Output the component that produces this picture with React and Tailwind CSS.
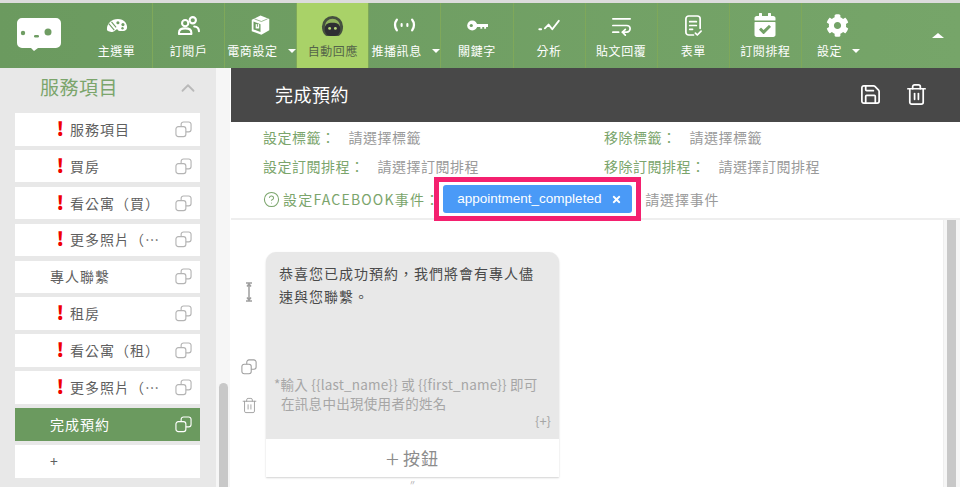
import { ChevronUp, CircleHelp, Save, Trash2, WrapText } from 'lucide-react';
import { FaCalendarCheck, FaCog, FaTimes } from 'react-icons/fa';

const font = { fontFamily: '"Noto Sans CJK TC", "Liberation Sans", sans-serif' };

function CopyIcon({ className }) {
  return (
    <svg viewBox="0 0 18 18" fill="none" stroke="currentColor" strokeWidth="1.2" className={className}>
      <rect x="1" y="6" width="10.5" height="10.5" rx="2.5" />
      <path d="M6.5 6V3.5A2.5 2.5 0 0 1 9 1h5.5A2.5 2.5 0 0 1 17 3.5V9a2.5 2.5 0 0 1-2.5 2.5h-3" />
    </svg>
  );
}

function Palette() {
  return (
    <svg viewBox="0 0 24 16" className="h-[15px] w-[22px]">
      <path d="M1 12C1 6 6 1 13 1s10 5 10 9c0 3-2 4-4 4h-4c-2 0-2-2-3-2s-2 2-5 3c-3 0-6-1-6-3z" fill="white" />
      <circle cx="13" cy="5" r="1.700" fill="#6f9d63" />
      <circle cx="18.500" cy="7" r="1.700" fill="#6f9d63" />
      <circle cx="18" cy="11" r="1.300" fill="#6f9d63" />
      <path d="M3 6l6 7M6 4l5 6" stroke="#6f9d63" strokeWidth="1.200" />
    </svg>
  );
}

function Users() {
  return (
    <svg viewBox="0 0 24 20" fill="none" stroke="white" strokeWidth="2.200" strokeLinejoin="round" className="h-[19px] w-[23px]">
      <circle cx="8.500" cy="7.500" r="3.300" />
      <path d="M2 19v-1.500C2 14.500 4.500 13 8.500 13s6.500 1.500 6.500 4.500V19z" />
      <circle cx="16.500" cy="4.500" r="3.300" />
      <path d="M18 11c3 .3 5 2 5 5" strokeLinecap="round" />
    </svg>
  );
}

function BoxIcon() {
  return (
    <svg viewBox="0 0 24 24" className="h-[22px] w-[21px]">
      <path d="M12 1l10 4v13l-9 5-11-4V6z" fill="white" />
      <path d="M4 8l8 3v9l-8-3z" fill="#6f9d63" />
      <path d="M6.500 11h4v5h-4z" fill="white" />
      <path d="M8.500 11v3" stroke="#6f9d63" strokeWidth="1" />
      <path d="M5 5l8 3 7-3" stroke="#6f9d63" strokeWidth="0.800" fill="none" />
    </svg>
  );
}

function Robot() {
  return (
    <svg viewBox="0 0 24 24" className="h-[23px] w-[23px]">
      <path d="M1 13a11 11 0 0 1 22 0c0 6-3 10-6 10H7c-3 0-6-4-6-10z" fill="#45503f" />
      <path d="M4 13a8 8 0 0 1 16 0z" fill="#8fb25c" />
      <rect x="4" y="9" width="16" height="14" rx="6" fill="#2e2e33" />
      <circle cx="9" cy="15" r="1.500" fill="#b7d877" />
      <circle cx="15" cy="15" r="1.500" fill="#b7d877" />
    </svg>
  );
}

function Broadcast() {
  return (
    <svg viewBox="0 0 24 14" fill="none" stroke="white" strokeWidth="2.400" strokeLinecap="round" className="h-[14px] w-[23px]">
      <path d="M4 1.500c-2.500 3-2.500 8 0 11M20 1.500c2.500 3 2.500 8 0 11" />
      <path d="M9 6v2M15 6v2" strokeWidth="2.200" />
    </svg>
  );
}

function Key() {
  return (
    <svg viewBox="0 0 22 11" className="h-[11px] w-[21px]">
      <circle cx="5.500" cy="5.500" r="5.300" fill="white" />
      <circle cx="4.500" cy="5.500" r="1.700" fill="#6f9d63" />
      <path d="M9 4h13v3h-2v2h-2V7h-2v2h-2V7H9z" fill="white" />
    </svg>
  );
}

function ChartLine() {
  return (
    <svg viewBox="0 0 24 14" fill="none" stroke="white" strokeWidth="2" strokeLinecap="round" strokeLinejoin="round" className="h-[13px] w-[23px]">
      <path d="M1 11h2M7 10l4-4 4 5 7-9" />
    </svg>
  );
}

function FormIcon() {
  return (
    <svg viewBox="0 0 20 24" fill="none" stroke="white" strokeWidth="1.800" strokeLinecap="round" strokeLinejoin="round" className="h-[23px] w-[19px]">
      <path d="M10 22H5a3 3 0 0 1-3-3V5a3 3 0 0 1 3-3h9a3 3 0 0 1 3 3v10" />
      <path d="M6 8h7M6 12h7M6 16h3M12 20l2 2 4-4" />
    </svg>
  );
}

const navItems = [
  { label: '主選單', icon: <Palette /> },
  { label: '訂閱戶', icon: <Users /> },
  { label: '電商設定', icon: <BoxIcon />, caret: 'w-full pl-[2px]' },
  { label: '自動回應', icon: <Robot />, active: true },
  { label: '推播訊息', icon: <Broadcast />, caret: 'w-full pl-[2px]' },
  { label: '關鍵字', icon: <Key /> },
  { label: '分析', icon: <ChartLine /> },
  { label: '貼文回覆', icon: <WrapText size={23} color="white" strokeWidth={1.800} /> },
  { label: '表單', icon: <FormIcon /> },
  { label: '訂閱排程', icon: <FaCalendarCheck size={24} color="white" /> },
  { label: '設定', icon: <FaCog size={23} color="white" />, caret: 'w-full pl-[15px]', noBorder: true },
];

const services = [
  { label: '服務項目', warn: true },
  { label: '買房', warn: true },
  { label: '看公寓（買）', warn: true },
  { label: '更多照片（…', warn: true },
  { label: '專人聯繫' },
  { label: '租房', warn: true },
  { label: '看公寓（租）', warn: true },
  { label: '更多照片（…', warn: true },
  { label: '完成預約', selected: true },
];

function Caret({ className = '' }) {
  return <span className={`h-0 w-0 border-x-[4px] border-t-[4px] border-x-transparent border-t-white ${className}`} />;
}

function NavItem({ item }) {
  return (
    <div
      className={`flex w-[72.1px] shrink-0 flex-col items-center border-r border-[#7fa85a] ${
        item.active ? 'bg-[#a9d268] text-[#55654a]' : 'text-white'
      } ${item.noBorder ? 'border-r-0' : ''}`}
    >
      <div className="flex h-[39px] items-center justify-center pt-[5px]">{item.icon}</div>
      <div className={`flex items-center text-[12px] leading-[17px] tracking-[0.6px] ${item.caret || ''}`}>
        <span className="whitespace-nowrap">{item.label}</span>
        {item.caret && <Caret className="ml-[10px]" />}
      </div>
    </div>
  );
}

function ServiceRow({ item }) {
  return (
    <div
      className={`flex h-[32.5px] items-center text-[14px] tracking-[1px] ${
        item.selected ? 'bg-[#6b9a5f] text-white' : 'bg-white text-[#5f5f5f]'
      }`}
    >
      <span className="flex w-[35px] shrink-0 justify-end">
        {item.warn && <span className="mr-[-15px] mb-[4px] text-[19px] font-black leading-none text-[#f00000]">!</span>}
      </span>
      <span className={`flex-1 whitespace-nowrap ${item.warn ? 'pl-[20px]' : ''}`}>{item.label}</span>
      <CopyIcon className={`mr-[8px] h-[17px] w-[17px] ${item.selected ? 'text-white' : 'text-[#b4b4b4]'}`} />
    </div>
  );
}

function Sidebar() {
  return (
    <aside className="flex w-[231px] shrink-0 bg-white">
      <div className="w-[216px] bg-[#e8e8e8] pl-[15px] pr-[16px]">
        <div className="flex h-[45px] items-center justify-between pb-[6px] pl-[25px] pr-[1px]">
          <span className="text-[19px] tracking-[0.5px] text-[#7ba56c]">服務項目</span>
          <ChevronUp size={22} className="text-[#b9b9b9]" />
        </div>
        <div className="flex flex-col gap-[4.4px]">
          {services.map((item, index) => (
            <ServiceRow key={index} item={item} />
          ))}
          <div className="flex h-[32.5px] items-center bg-white pl-[35px] text-[14px] text-[#5f5f5f]">+</div>
        </div>
      </div>
      <div className="flex w-[14px] flex-col justify-end bg-[#f6f6f6] pl-[3px] pr-[2px]">
        <div className="h-[104px] rounded-t-full bg-[#c8c8c8]" />
      </div>
    </aside>
  );
}

function Field({ label, value }) {
  return (
    <div className="flex items-center text-[14px] tracking-[0.5px]">
      <span className="text-[#7ba56c]">{label}</span>
      <span className="ml-[13px] text-[#9a9a9a]">{value}</span>
    </div>
  );
}

function Editor() {
  return (
    <div className="flex flex-1 border-r border-[#eeeeee] pl-[6px] pt-[32px]">
      <div className="flex h-[210px] w-[24px] flex-col items-center pt-[30px] text-[#9e9e9e]">
        <svg viewBox="0 0 8 20" className="h-[20px] w-[8px]" fill="none" stroke="currentColor" strokeWidth="1.500">
          <path d="M1 1h6M1 19h6M4 1v18M2 4.500 4 2l2 2.500M2 15.500 4 18l2-2.500" />
        </svg>
        <CopyIcon className="mt-[57px] h-[16px] w-[16px]" />
        <Trash2 size={17} strokeWidth={1.300} className="mt-[22px]" />
      </div>
      <div className="ml-[5px] h-[225px] w-[293px] rounded-t-[10px] bg-[#e8e8e8] shadow-[0_1px_2px_rgba(0,0,0,0.18)]">
        <div className="flex h-[187px] flex-col px-[13px] pt-[10px]">
          <p className="text-[14px] leading-[23px] tracking-[1px] text-[#4a4a4a]">恭喜您已成功預約，我們將會有專人儘速與您聯繫。</p>
          <p className="-ml-[5px] mt-[67px] whitespace-nowrap text-[13.500px] leading-[19px] tracking-[0.2px] text-[#a6a6a6]">*輸入 {'{{last_name}}'} 或 {'{{first_name}}'} 即可</p>
          <p className="pl-[2px] text-[13.500px] leading-[19px] tracking-[0.3px] text-[#a6a6a6]">在訊息中出現使用者的姓名</p>
          <div className="-mr-[5px] -mt-[2px] text-right text-[13px] text-[#a6a6a6]">{'{+}'}</div>
        </div>
        <div className="flex h-[38px] items-center justify-center bg-white text-[17px] tracking-[1px] text-[#8c8c8c]">
          <span className="mr-[3px] text-[24px] font-light leading-none">+</span>按鈕
        </div>
        <div className="mt-[2px] text-center text-[7px] leading-none text-[#9a9a9a]">〃</div>
      </div>
    </div>
  );
}

export default function App() {
  return (
    <div className="flex h-[487px] w-[960px] flex-col overflow-hidden bg-white" style={font}>
      <div className="h-[3px] shrink-0 bg-[#dcdcdc]" />
      <nav className="flex h-[65px] shrink-0 bg-linear-to-r from-[#6b9a5f] to-[#76a569]">
        <div className="flex w-[81px] shrink-0 items-center justify-center pb-[3px] pr-[3px]">
          <svg viewBox="0 0 46 34" className="h-[34px] w-[46px]">
            <path d="M6 1h34a5 5 0 0 1 5 5v20a5 5 0 0 1-5 5H22l-4 3-3-3H6a5 5 0 0 1-5-5V6a5 5 0 0 1 5-5z" fill="white" />
            <circle cx="7" cy="16" r="2.200" fill="#6f9d63" />
            <rect x="18" y="18" width="5" height="2.500" rx="1.200" fill="#6f9d63" />
            <circle cx="32" cy="15" r="3.500" fill="#6f9d63" />
          </svg>
        </div>
        {navItems.map((item) => (
          <NavItem key={item.label} item={item} />
        ))}
        <div className="flex flex-1 items-center justify-end pr-[16px]">
          <span className="h-0 w-0 border-x-[6px] border-b-[5px] border-x-transparent border-b-white" />
        </div>
      </nav>
      <div className="flex min-h-0 flex-1">
        <Sidebar />
        <main className="flex min-w-0 flex-1 flex-col">
          <header className="flex h-[54px] shrink-0 items-center justify-between bg-[#484848] pb-[2px] pl-[44px] pr-[32px] text-white">
            <h1 className="text-[18px] font-normal tracking-[0.5px]">完成預約</h1>
            <div className="flex items-center gap-[23px]">
              <Save size={23} strokeWidth={1.800} />
              <Trash2 size={23} strokeWidth={1.800} />
            </div>
          </header>
          <section className="h-[98px] shrink-0 border-b-2 border-[#eeeeee] pl-[32px]">
            <div className="grid h-[26px] grid-cols-[341px_1fr] items-end">
              <Field label="設定標籤：" value="請選擇標籤" />
              <Field label="移除標籤：" value="請選擇標籤" />
            </div>
            <div className="grid h-[29px] grid-cols-[341px_1fr] items-end">
              <Field label="設定訂閱排程：" value="請選擇訂閱排程" />
              <Field label="移除訂閱排程：" value="請選擇訂閱排程" />
            </div>
            <div className="flex items-center text-[14px]">
              <CircleHelp size={17} strokeWidth={1.500} className="text-[#7ba56c]" />
              <span className="ml-[3px] whitespace-nowrap tracking-[1.2px] text-[#7ba56c]">設定FACEBOOK事件：</span>
              <div className="relative ml-[-6px] border-[5px] border-[#f4206f] bg-white px-[4px] py-[3px]">
                <div className="flex h-[28px] w-[189px] items-center justify-between rounded-[3px] bg-[#4a9af7] pl-[14px] pr-[10px] text-[13.500px] text-white" style={{ fontFamily: '"Liberation Sans", sans-serif' }}>
                  <span>appointment_completed</span>
                  <FaTimes size={11} />
                </div>
              </div>
              <span className="ml-[4px] tracking-[0.8px] text-[#9a9a9a]">請選擇事件</span>
            </div>
          </section>
          <div className="flex min-h-0 flex-1">
            <Editor />
            <div className="w-[16px] shrink-0 bg-[#f6f6f6] pl-[3px] pr-[4px]">
              <div className="h-full bg-[#c8c8c8]" />
            </div>
          </div>
        </main>
      </div>
    </div>
  );
}
